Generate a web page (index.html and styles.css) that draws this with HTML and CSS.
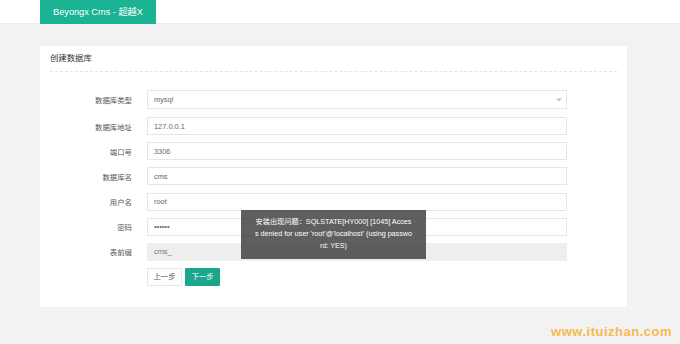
FILE: index.html
```html
<!doctype html>
<html>
<head>
<meta charset="utf-8">
<title>创建数据库</title>
<link rel="stylesheet" href="styles.css">
</head>
<body>
<!--顶部-->
<div class="header">
	<div class="logo">Beyongx Cms - 超越X</div>
</div>
<!--主体卡片-->
<div class="main">
	<div class="card">
		<div class="card-title">创建数据库</div>
		<div class="form">
			<div class="row first">
				<label class="label">数据库类型</label>
				<div class="select">
					<span>mysql</span>
					<svg class="arrow" width="6" height="4" viewBox="0 0 6 4"><path d="M0 0.5h6L3 3.5z" fill="#c2c2c2"/></svg>
				</div>
			</div>
			<div class="row">
				<label class="label">数据库地址</label>
				<input class="input" type="text" value="127.0.0.1">
			</div>
			<div class="row">
				<label class="label">端口号</label>
				<input class="input" type="text" value="3306">
			</div>
			<div class="row">
				<label class="label">数据库名</label>
				<input class="input" type="text" value="cms">
			</div>
			<div class="row">
				<label class="label">用户名</label>
				<input class="input" type="text" value="root">
			</div>
			<div class="row">
				<label class="label">密码</label>
				<input class="input" type="password" value="123456">
			</div>
			<div class="row">
				<label class="label">表前缀</label>
				<input class="input disabled" type="text" value="cms_" disabled>
			</div>
			<div class="row">
				<span class="label"></span>
				<div class="btns">
					<a class="btn btn-default" href="javascript:;">上一步</a>
					<a class="btn btn-primary" href="javascript:;">下一步</a>
				</div>
			</div>
		</div>
	</div>
</div>
<!--提示层-->
<div class="msg">
	<span>安装出现问题：SQLSTATE[HY000] [1045] Acces</span>
	<span>s denied for user 'root'@'localhost' (using passwo</span>
	<span>rd: YES)</span>
</div>
<div class="watermark">www.ituizhan.com</div>
</body>
</html>
```

FILE: styles.css
```css
*{
	margin:0;
	padding:0;
	box-sizing:border-box;
}
body
{
	width:680px;
	height:344px;
	background-color:#f2f2f2;
	font-family:"Liberation Sans","Noto Sans CJK SC",sans-serif;
	position:relative;
	overflow:hidden;
}
/*顶部*/
.header
{
	height:24px;
	background-color:#fff;
	padding-left:40px;
	border-bottom:1px solid #ececec;
}
.logo
{
	display:inline-block;
	height:24px;
	line-height:24px;
	width:116px;
	text-align:center;
	background-color:#1ab394;
	color:#fff;
	font-size:9.2px;
}
/*主体*/
.main
{
	padding:22px 0 0 40px;
}
.card
{
	width:587px;
	height:261px;
	background-color:#fff;
}
.card-title
{
	margin:0 10px;
	height:26px;
	line-height:22px;
	padding-top:1px;
	font-size:8.4px;
	color:#333;
	border-bottom:1px dashed #e4e4e4;
}
.form
{
	padding-top:18px;
}
.row
{
	display:flex;
	align-items:center;
	height:18px;
	margin-bottom:7.2px;
}
.row.first
{
	height:19px;
	margin-bottom:8px;
}
.label
{
	width:92px;
	text-align:right;
	font-size:7.4px;
	color:#555;
	margin-right:15px;
}
.input,.select
{
	width:420px;
	height:100%;
	border:1px solid #e6e6e6;
	padding-left:6px;
	font-family:"Liberation Sans","Noto Sans CJK SC",sans-serif;
	font-size:7.4px;
	color:#666;
	background-color:#fff;
	outline:none;
}
.select
{
	display:flex;
	align-items:center;
	justify-content:space-between;
	padding-right:4px;
}
.input.disabled
{
	background-color:#eee;
	border-color:#eee;
	color:#777;
}
.btns
{
	display:flex;
	gap:3px;
	height:18px;
}
.btn
{
	display:block;
	height:18px;
	line-height:16px;
	text-align:center;
	font-size:7.4px;
	text-decoration:none;
	border:1px solid #e6e6e6;
}
.btn-default
{
	width:35px;
	background-color:#fff;
	color:#555;
}
.btn-primary
{
	width:35px;
	background-color:#1aa68a;
	border-color:#1aa68a;
	color:#fff;
	border-radius:1px;
}
/*提示层*/
.msg
{
	position:absolute;
	left:241px;
	top:210px;
	width:185px;
	height:49px;
	padding-top:6px;
	background-color:rgba(60,60,60,0.82);
	color:#fff;
	text-align:center;
	font-size:7.2px;
	line-height:12px;
}
.msg span
{
	display:block;
	white-space:nowrap;
}
/*水印*/
.watermark
{
	position:absolute;
	right:8px;
	bottom:5px;
	font-size:13px;
	font-weight:bold;
	letter-spacing:0.5px;
	color:#f7bb4d;
}
```
